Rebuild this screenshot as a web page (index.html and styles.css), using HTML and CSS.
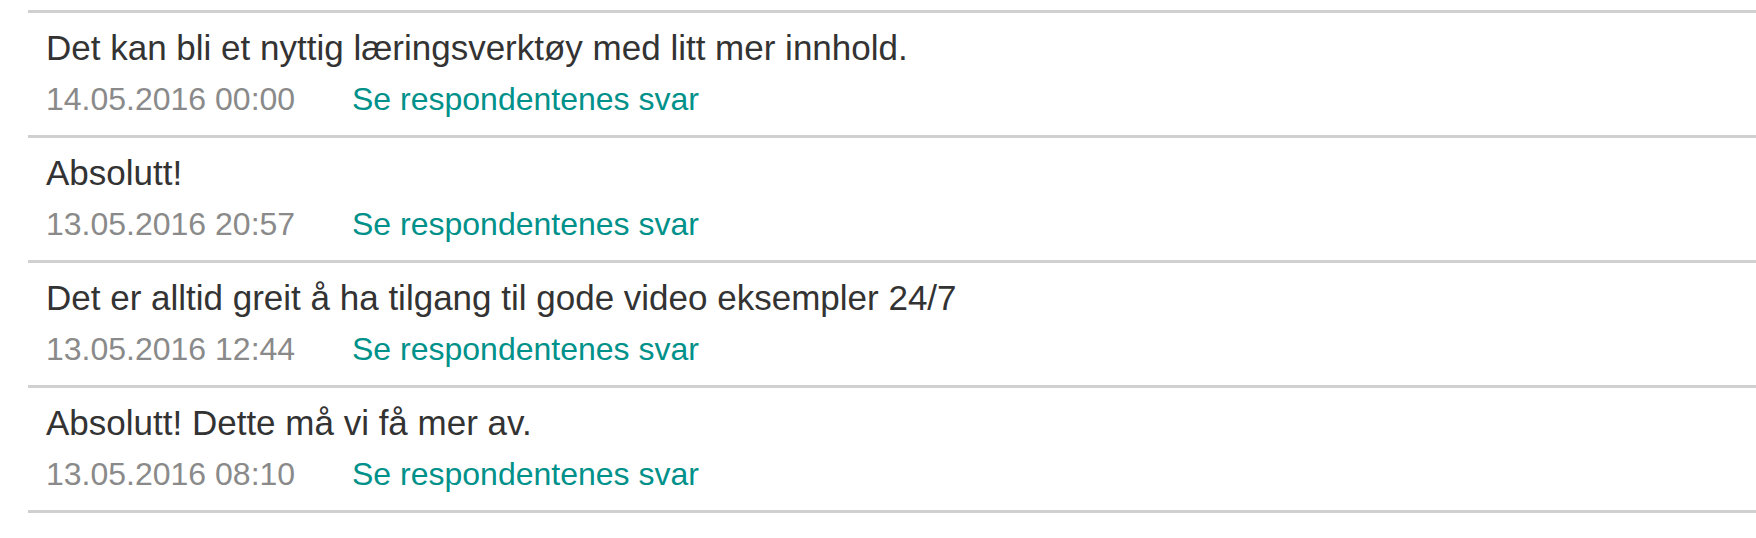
FILE: index.html
```html
<!DOCTYPE html>
<html lang="no">
<head>
<meta charset="utf-8">
<title>Svar</title>
<link rel="stylesheet" href="styles.css">
</head>
<body>
<ul class="answers">
  <li class="answer">
    <p class="answer-text">Det kan bli et nyttig læringsverktøy med litt mer innhold.</p>
    <div class="answer-meta"><span class="answer-date">14.05.2016 00:00</span><a class="answer-link" href="#">Se respondentenes svar</a></div>
  </li>
  <li class="answer">
    <p class="answer-text">Absolutt!</p>
    <div class="answer-meta"><span class="answer-date">13.05.2016 20:57</span><a class="answer-link" href="#">Se respondentenes svar</a></div>
  </li>
  <li class="answer">
    <p class="answer-text">Det er alltid greit å ha tilgang til gode video eksempler 24/7</p>
    <div class="answer-meta"><span class="answer-date">13.05.2016 12:44</span><a class="answer-link" href="#">Se respondentenes svar</a></div>
  </li>
  <li class="answer">
    <p class="answer-text">Absolutt! Dette må vi få mer av.</p>
    <div class="answer-meta"><span class="answer-date">13.05.2016 08:10</span><a class="answer-link" href="#">Se respondentenes svar</a></div>
  </li>
</ul>
</body>
</html>
```
FILE: styles.css
```css
html, body {
  margin: 0;
  padding: 0;
  background: #fff;
}
body {
  font-family: "Liberation Sans", Arial, Helvetica, sans-serif;
  color: #333;
}
.answers {
  list-style: none;
  margin: 10px 0 0 28px;
  padding: 0;
  border-bottom: 3px solid #d0d0d0;
}
.answer {
  border-top: 3px solid #d0d0d0;
  padding: 10px 18px 12px;
}
.answer-text {
  margin: 0;
  font-size: 35px;
  line-height: 50px;
}
.answer-meta {
  display: flex;
  margin-top: 2px;
  font-size: 32px;
  line-height: 48px;
}
.answer-date {
  flex: 0 0 306px;
  color: #8a8a8a;
}
.answer-link {
  color: #00918a;
  text-decoration: none;
}
```
